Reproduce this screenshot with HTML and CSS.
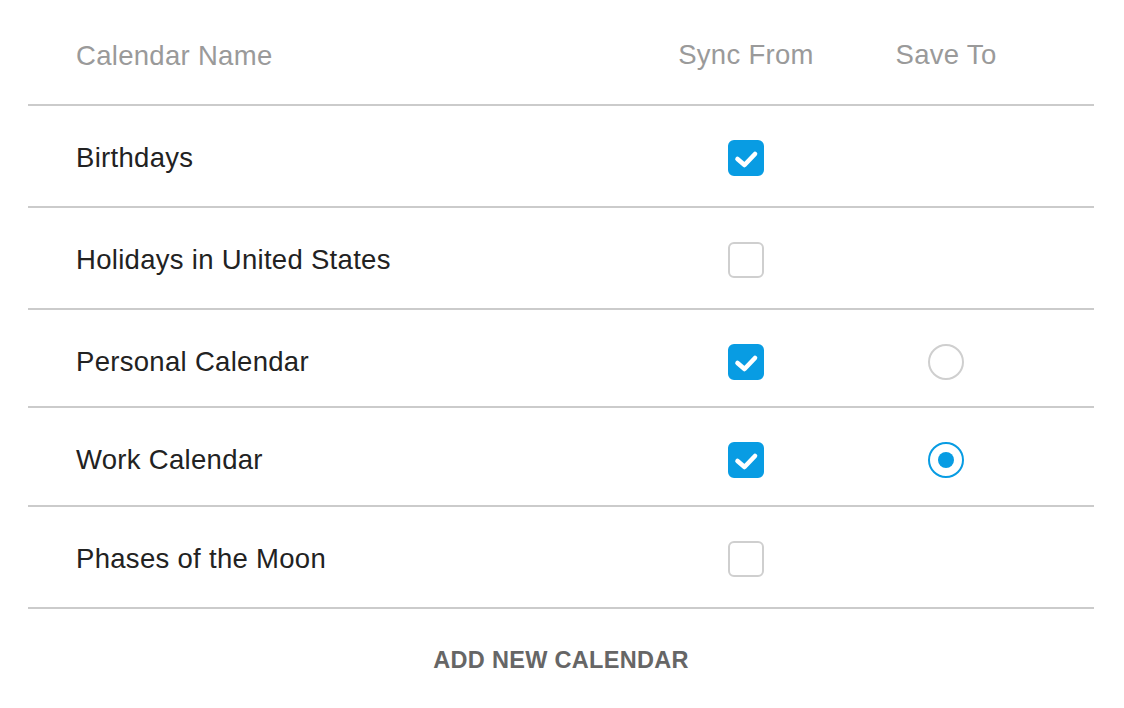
FILE: index.html
```html
<!DOCTYPE html>
<html lang="en">
<head>
<meta charset="utf-8">
<title>Calendars</title>
<link rel="stylesheet" href="styles.css">
</head>
<body>
<div class="table">
  <div class="row head">
    <div class="cell name">Calendar Name</div>
    <div class="cell col">Sync From</div>
    <div class="cell col">Save To</div>
  </div>
  <div class="row">
    <div class="cell name">Birthdays</div>
    <div class="cell col"><span class="check on"><svg viewBox="0 0 36 36"><path d="M9.5 19 L16.5 25 L27 14"/></svg></span></div>
    <div class="cell col"></div>
  </div>
  <div class="row">
    <div class="cell name">Holidays in United States</div>
    <div class="cell col"><span class="check"></span></div>
    <div class="cell col"></div>
  </div>
  <div class="row short">
    <div class="cell name">Personal Calendar</div>
    <div class="cell col"><span class="check on"><svg viewBox="0 0 36 36"><path d="M9.5 19 L16.5 25 L27 14"/></svg></span></div>
    <div class="cell col"><span class="radio"></span></div>
  </div>
  <div class="row short">
    <div class="cell name">Work Calendar</div>
    <div class="cell col"><span class="check on"><svg viewBox="0 0 36 36"><path d="M9.5 19 L16.5 25 L27 14"/></svg></span></div>
    <div class="cell col"><span class="radio on"></span></div>
  </div>
  <div class="row">
    <div class="cell name">Phases of the Moon</div>
    <div class="cell col"><span class="check"></span></div>
    <div class="cell col"></div>
  </div>
  <div class="add">ADD NEW CALENDAR</div>
</div>
</body>
</html>
```
FILE: styles.css
```css
html, body {
  margin: 0;
  padding: 0;
  background: #ffffff;
}
body {
  font-family: "Liberation Sans", Arial, sans-serif;
}
.table {
  margin: 0 30px 0 28px;
  width: 1066px;
}
.row {
  display: grid;
  grid-template-columns: 1fr 200px 200px;
  padding-right: 48px;
  height: 100px;
  border-bottom: 2px solid #cbcbcb;
  align-items: start;
}
.row.head {
  height: 104px;
}
.row.short {
  height: 96px;
}
.row.short + .row.short {
  height: 97px;
}
.cell {
  font-size: 27.5px;
  letter-spacing: 0.3px;
  color: #222222;
  padding-top: 34px;
  height: 36px;
  line-height: 35px;
}
.name {
  padding-left: 48px;
}
.col {
  display: flex;
  justify-content: center;
  align-items: center;
}
.head .cell {
  color: #9a9a9a;
  padding-top: 39px;
  height: 32px;
  line-height: 34px;
}
.check {
  box-sizing: border-box;
  width: 36px;
  height: 36px;
  border-radius: 6px;
  border: 2px solid #cfcfcf;
  display: block;
}
.check.on {
  background: #089ce3;
  border-color: #089ce3;
  position: relative;
}
.check svg {
  position: absolute;
  left: -2px;
  top: -2px;
  width: 36px;
  height: 36px;
  fill: none;
  stroke: #ffffff;
  stroke-width: 4.6;
  stroke-linecap: round;
  stroke-linejoin: round;
}
.radio {
  box-sizing: border-box;
  width: 36px;
  height: 36px;
  border-radius: 50%;
  border: 2px solid #cfcfcf;
  display: flex;
  align-items: center;
  justify-content: center;
}
.radio.on {
  border-color: #089ce3;
}
.radio.on::after {
  content: "";
  width: 16px;
  height: 16px;
  border-radius: 50%;
  background: #089ce3;
}
.add {
  text-align: center;
  font-weight: bold;
  font-size: 23.5px;
  letter-spacing: 0.3px;
  color: #666666;
  padding-top: 38px;
  line-height: 26px;
}
```
